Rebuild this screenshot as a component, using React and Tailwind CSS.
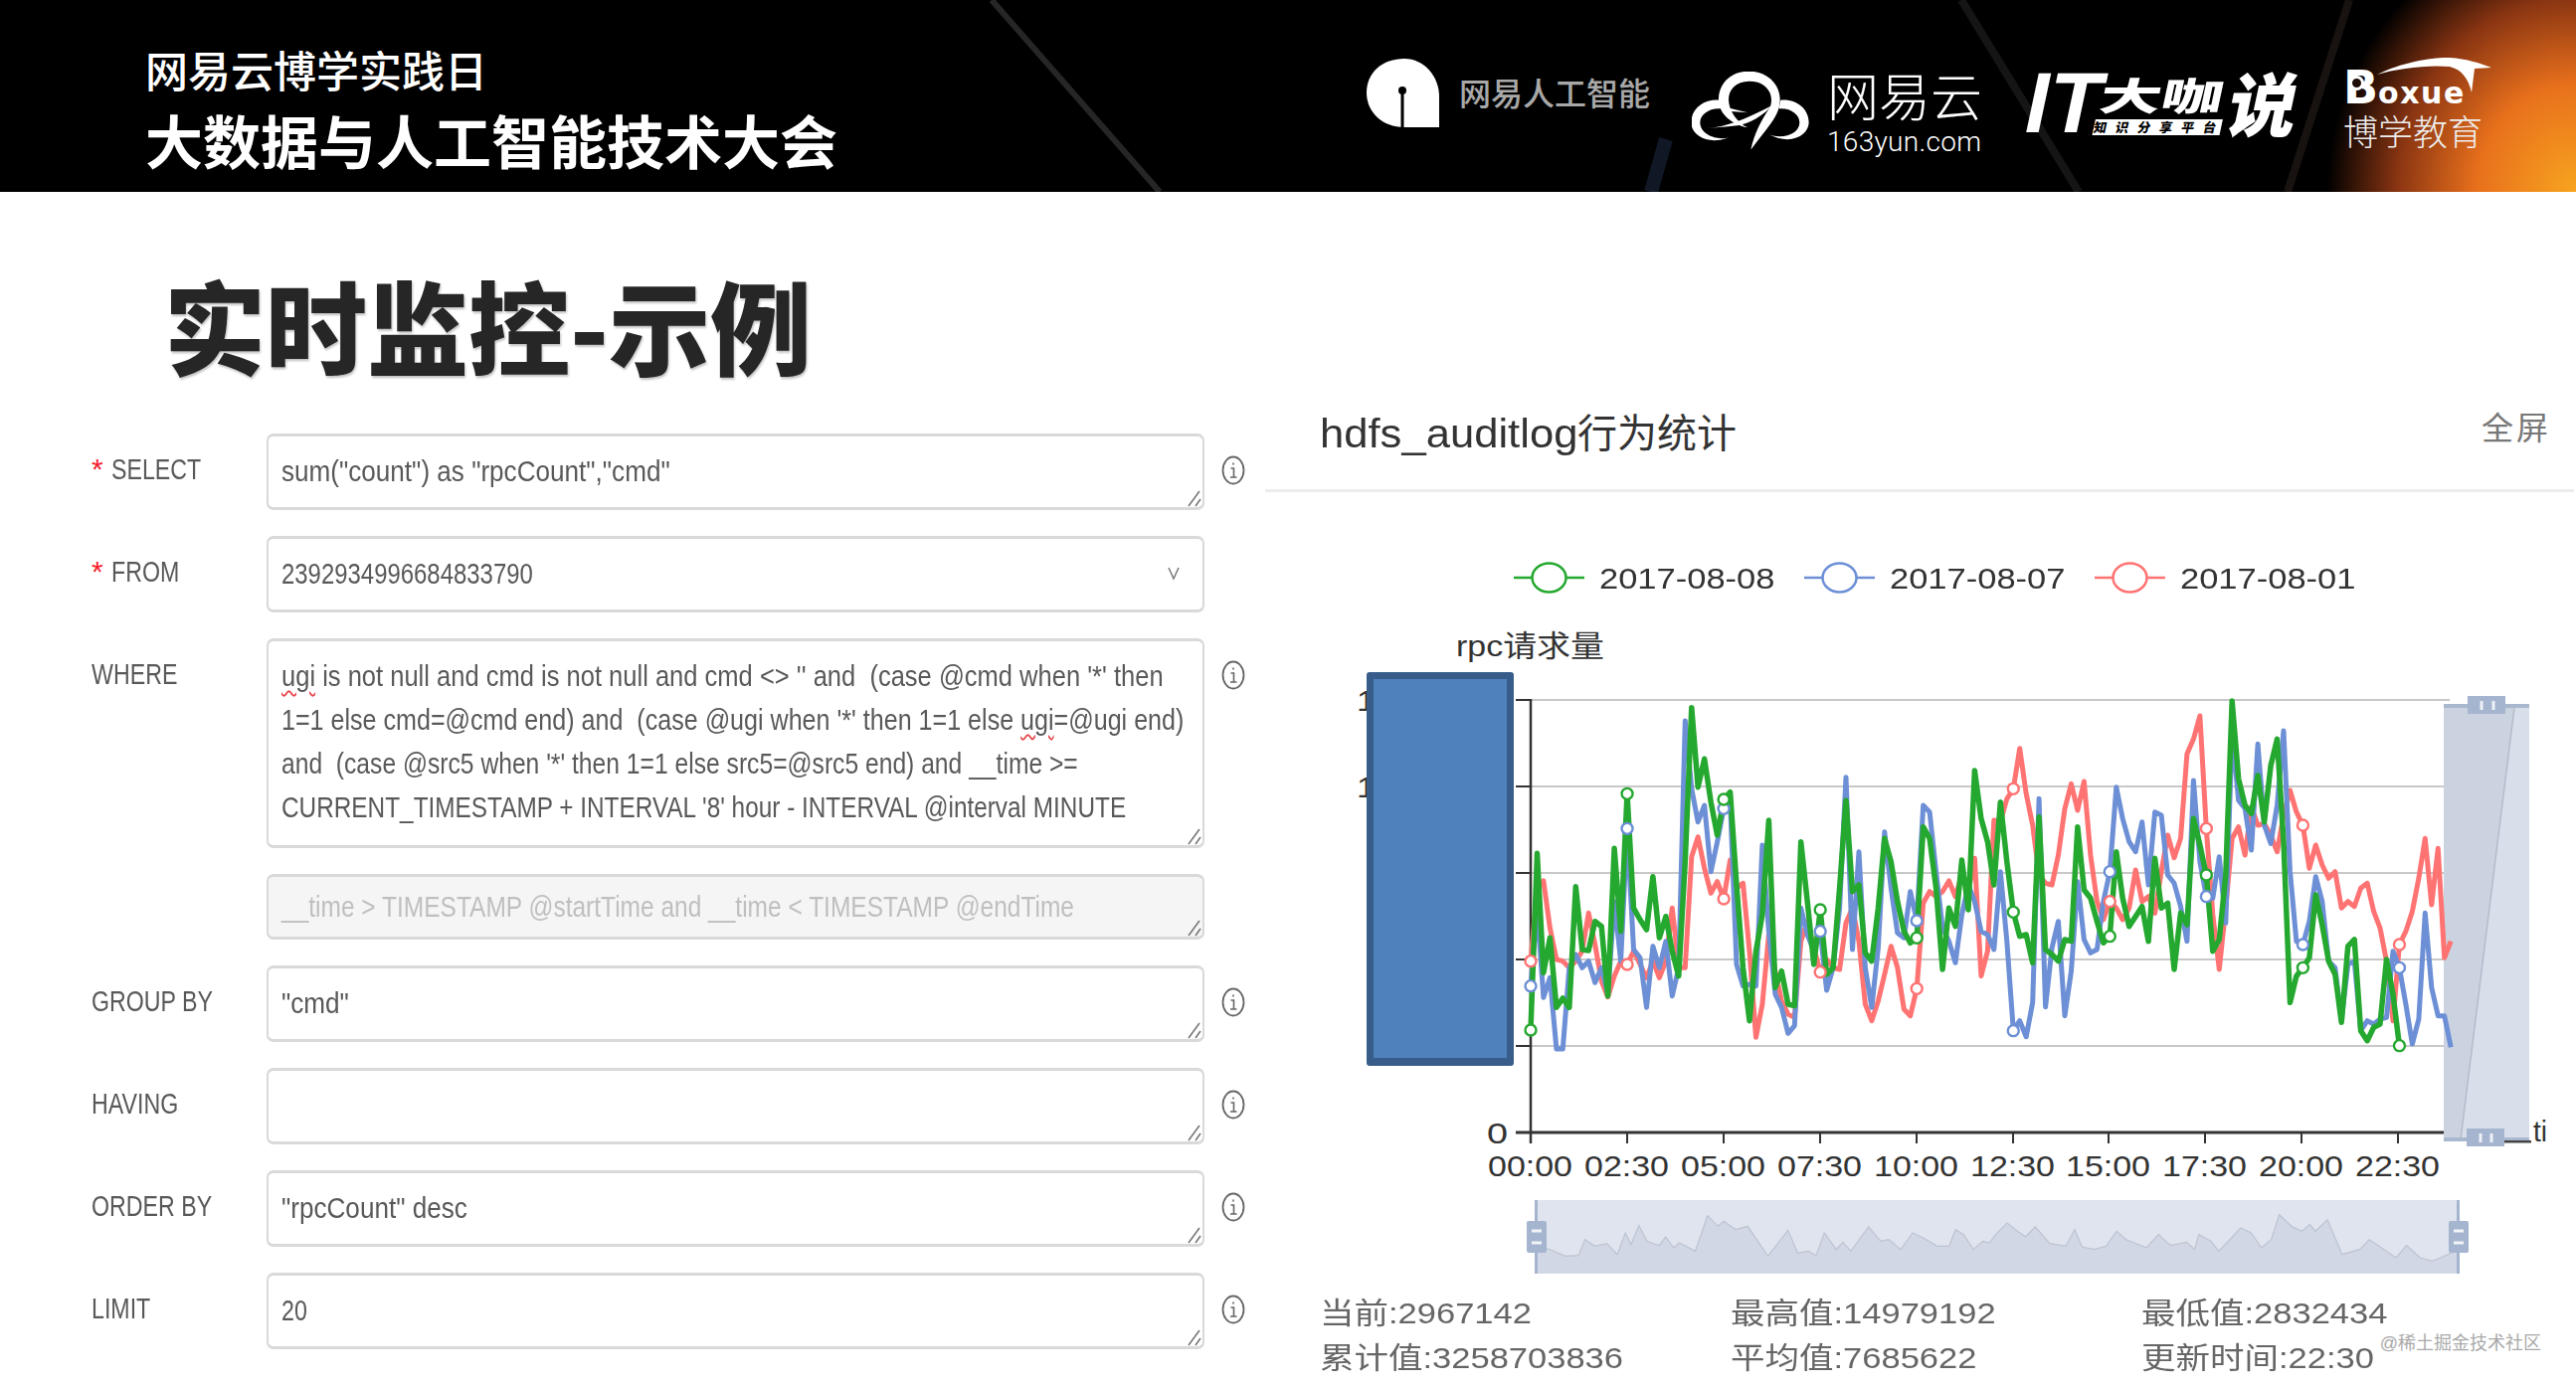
import React from 'react';

const GREEN = [1068,535,895,790,1000,972,1000,635,825,828,740,755,965,520,770,355,700,735,765,605,790,725,830,905,560,95,335,250,380,480,372,350,630,880,1040,830,720,435,940,890,990,995,500,680,870,705,900,880,640,375,650,630,835,860,700,490,560,680,770,805,790,455,490,640,885,700,755,555,705,285,430,500,630,380,560,712,785,780,865,425,825,840,860,795,800,455,645,670,740,805,785,530,670,755,725,695,800,550,700,685,885,715,750,430,510,600,830,795,600,75,310,390,415,300,440,270,190,500,985,905,880,850,660,750,860,900,1045,815,795,1070,1100,1060,1050,855,960,1115];
const BLUE = [935,700,970,910,1125,1125,880,840,880,860,925,880,960,680,860,460,825,850,1000,815,880,800,965,880,135,340,440,390,590,500,400,380,870,935,930,935,510,770,960,1000,1078,1055,700,780,830,770,948,880,700,305,825,530,880,1000,820,470,640,775,790,650,738,390,410,590,760,800,865,720,630,680,770,780,825,590,800,1070,1040,1088,985,370,998,820,740,1025,890,620,795,835,825,680,590,335,430,500,530,440,630,410,420,600,625,695,800,315,560,665,670,545,745,170,375,400,525,205,450,505,390,165,590,800,810,740,605,680,860,880,1040,870,860,1070,1040,1050,1035,1030,830,880,990,1110,1035,715,940,1025,1025,1120];
const RED = [860,640,618,760,855,860,880,860,830,715,810,920,968,905,860,870,830,870,910,860,910,860,700,880,880,545,485,580,655,620,672,555,640,625,830,1090,990,780,890,980,1020,1030,800,740,820,893,855,880,885,745,700,800,990,1040,980,900,815,880,1005,1025,943,685,650,665,650,618,665,600,650,550,905,830,435,440,370,340,218,355,450,600,625,630,540,400,325,405,318,540,680,735,680,700,735,700,585,680,665,715,590,480,548,490,235,190,120,460,720,885,700,490,455,540,395,450,445,480,530,420,345,410,450,580,510,570,610,590,700,680,695,640,625,710,760,860,1040,810,770,710,610,490,690,520,850,800];

const SPARK = [[277,580],[295,590],[313,610],[330,608],[338,560],[350,580],[365,572],[378,605],[388,540],[395,575],[405,518],[415,565],[430,578],[438,552],[448,585],[455,570],[475,595],[490,488],[503,520],[510,505],[525,530],[540,520],[565,610],[590,532],[602,600],[615,595],[625,608],[635,540],[650,590],[658,568],[668,595],[690,522],[705,565],[715,560],[730,590],[745,540],[760,558],[775,580],[790,580],[798,530],[808,545],[820,590],[832,565],[840,570],[848,545],[862,510],[875,535],[885,552],[897,522],[915,572],[935,580],[946,530],[955,582],[970,590],[985,580],[998,535],[1010,560],[1035,585],[1050,545],[1065,578],[1085,568],[1095,590],[1100,545],[1115,565],[1125,595],[1135,570],[1152,525],[1165,540],[1178,585],[1190,560],[1200,485],[1215,520],[1228,535],[1238,515],[1245,535],[1260,500],[1278,605],[1300,590],[1312,560],[1330,590],[1345,615],[1358,578],[1375,615],[1390,625],[1400,615],[1423,590]];

const X_LABELS = ['00:00','02:30','05:00','07:30','10:00','12:30','15:00','17:30','20:00','22:30'];
const TICKS = [1539,1636,1733,1830,1927,2024,2120,2217,2314,2411];
const Y_LABELS = ['15000000','12000000','9000000','6000000','3000000'];
const GRID = [704,791,878,965,1052];

const px = (i) => 1539 + 6.47 * i;
const py = (v) => v / 3 + 680;
const toPoints = (ys) => ys.map((v, i) => `${px(i).toFixed(1)},${py(v).toFixed(1)}`).join(' ');
const sparkPoints = SPARK.map(([x, y]) => `${(x / 1.235 + 1320).toFixed(1)},${(y / 3 + 1060).toFixed(1)}`).join(' ');

const Grip = () => (
  <svg className="absolute right-0 bottom-0" width="16" height="18" viewBox="0 0 16 18">
    <path d="M2 17 L13 2 M9 17 L14 10" stroke="#777" strokeWidth="1.6" fill="none" />
  </svg>
);

const InfoIcon = () => (
  <svg className="mt-[22px] ml-[17px] shrink-0" width="24" height="30" viewBox="0 0 24 30">
    <ellipse cx="12" cy="15" rx="10.5" ry="13.5" fill="none" stroke="#666" strokeWidth="1.8" />
    <path d="M12 7.5v2 M9.5 13h3v9 M9 22h6.5" fill="none" stroke="#666" strokeWidth="1.6" />
  </svg>
);

const Line = ({ children, scale = 'scale-x-[.8]' }) => (
  <div className={`origin-left whitespace-pre ${scale}`}>{children}</div>
);

const Ugi = () => (
  <span className="underline decoration-wavy decoration-[#e5484d] decoration-2 underline-offset-4">ugi</span>
);

const Row = ({ label, required, height, info = true, select, disabled, pad = 'pt-[13px]', children }) => (
  <div className="flex items-start">
    <div className="w-[176px] h-[44px] mt-[14px] flex items-center text-[#595959]">
      {required && <span className="w-[20px] text-[#f5222d] text-[30px]">*</span>}
      {label && <Line>{label}</Line>}
    </div>
    <div
      className={`relative w-[943px] ${height} ${pad} pl-[13px] rounded-[7px] border-x-2 border-y-[3px] border-[#d9d9d9] overflow-hidden ${
        disabled ? 'bg-[#f5f5f5] text-[#bfbfbf]' : 'bg-white text-[#595959]'
      }`}
    >
      {children}
      {select ? (
        <svg className="absolute right-[22px] top-[26px]" width="14" height="16" viewBox="0 0 14 16">
          <path d="M2 3 L7 14 L12 3" fill="none" stroke="#777" strokeWidth="1.5" />
        </svg>
      ) : (
        <Grip />
      )}
    </div>
    {info && !disabled && <InfoIcon />}
  </div>
);

const T = ({ x, y, w, anchor = 'start', size = 30, fill = '#333', children }) => (
  <text
    x={x}
    y={y}
    textAnchor={anchor}
    fontSize={size}
    fill={fill}
    textLength={w}
    lengthAdjust={w ? 'spacingAndGlyphs' : undefined}
  >
    {children}
  </text>
);

const Chart = () => (
  <div className="relative mt-[19px] h-[678px]">
    <svg className="block" width="1318" height="678" viewBox="1272 620 1318 678">
      <T x={1464} y={660} w={149}>rpc请求量</T>
      {Y_LABELS.map((l, i) => (
        <T key={l} x={1516} y={GRID[i] + 11} anchor="end" w={l.length * 19}>{l}</T>
      ))}
      <T x={1495} y={1150} w={21}>0</T>
      {GRID.map((y) => (
        <g key={y}>
          <line x1="1539" x2="2463" y1={y} y2={y} stroke="#c8c8c8" strokeWidth="2" />
          <line x1="1524" x2="1539" y1={y} y2={y} stroke="#333" strokeWidth="2" />
        </g>
      ))}

      {/* vertical data zoom */}
      <rect x="2457" y="710" width="86" height="436" fill="#d9dfea" />
      <polygon points="2457,710 2528,710 2474,1146 2457,1146" fill="#cbd3e1" />
      <line x1="2528" y1="712" x2="2474" y2="1146" stroke="#b4bccb" strokeWidth="1.5" />
      <rect x="2457" y="708" width="86" height="4" fill="#aab8cf" />
      <rect x="2457" y="1144" width="86" height="4" fill="#aab8cf" />
      <rect x="2481" y="700" width="38" height="18" fill="#a6b5cf" />
      <path d="M2495 705v9 M2507 705v9" stroke="#eef1f6" strokeWidth="3" />
      <rect x="2480" y="1135" width="38" height="18" fill="#a6b5cf" />
      <path d="M2494 1140v9 M2505 1140v9" stroke="#eef1f6" strokeWidth="3" />

      <line x1="1539" x2="1539" y1="703" y2="1150" stroke="#333" strokeWidth="2.5" />
      <line x1="1524" x2="2457" y1="1139" y2="1139" stroke="#333" strokeWidth="3" />
      {TICKS.map((x) => (
        <line key={x} x1={x} x2={x} y1="1139" y2="1150" stroke="#333" strokeWidth="2" />
      ))}
      {X_LABELS.map((l, i) => (
        <T key={l} x={TICKS[i] - 43} y={1183} w={85}>{l}</T>
      ))}
      <rect x="2518" y="1147" width="27" height="2.5" fill="#444" />
      <T x={2547} y={1148} w={14}>ti</T>

      <polyline points={toPoints(RED)} fill="none" stroke="#ff7373" strokeWidth="5" strokeLinejoin="round" />
      <polyline points={toPoints(BLUE)} fill="none" stroke="#6c8fd6" strokeWidth="5" strokeLinejoin="round" />
      <polyline points={toPoints(GREEN)} fill="none" stroke="#25a82f" strokeWidth="5.5" strokeLinejoin="round" />
      {[
        [RED, '#ff7373'],
        [BLUE, '#6c8fd6'],
        [GREEN, '#25a82f'],
      ].map(([data, color]) =>
        [0, 15, 30, 45, 60, 75, 90, 105, 120, 135].map((i) => (
          <circle key={color + i} cx={px(i)} cy={py(data[i])} r="5.5" fill="#fff" stroke={color} strokeWidth="2.4" />
        ))
      )}

      {/* bottom data zoom */}
      <rect x="1544" y="1207" width="928" height="74" fill="#dfe4ee" />
      <polygon points={`1544,1281 ${sparkPoints} 2472,1281`} fill="#d1d7e4" />
      <polyline points={sparkPoints} fill="none" stroke="#bcc4d2" strokeWidth="1.2" />
      <rect x="1543" y="1207" width="3" height="74" fill="#a6b5cf" />
      <rect x="2470" y="1207" width="3" height="74" fill="#a6b5cf" />
      <rect x="1535" y="1228" width="20" height="32" rx="2" fill="#a6b5cf" />
      <path d="M1540 1238h10 M1540 1250h10" stroke="#f2f4f8" strokeWidth="3" />
      <rect x="2462" y="1228" width="20" height="32" rx="2" fill="#a6b5cf" />
      <path d="M2467 1238h10 M2467 1250h10" stroke="#f2f4f8" strokeWidth="3" />
    </svg>
    {/* blue block pasted over the y axis labels */}
    <div className="absolute left-[102px] top-[56px] w-[148px] h-[396px] rounded-[3px] bg-[#4f81bd] border-x-[7px] border-t-[7px] border-b-[8px] border-[#385d8a]" />
  </div>
);

const LegendItem = ({ color, label }) => (
  <div className="flex items-center gap-[15px]">
    <svg width="71" height="32" viewBox="0 0 71 32">
      <line x1="0" x2="71" y1="16" y2="16" stroke={color} strokeWidth="2.5" />
      <ellipse cx="35.5" cy="16" rx="17" ry="14.5" fill="#fff" stroke={color} strokeWidth="2.5" />
    </svg>
    <div className="w-[176px] origin-left scale-x-[1.15] whitespace-pre text-[30px] text-[#333]">{label}</div>
  </div>
);

const Stat = ({ children }) => (
  <div className="origin-left scale-x-[1.15] whitespace-pre">{children}</div>
);

// coordinates are the 3x crop of the logo, so viewBox is offset and scaled
const CloudLogo = () => (
  <svg width="120" height="78" viewBox="27 36 360 234" fill="#fff">
    <path d="M195 205 C150 195 105 165 108 115 C112 65 150 35 200 35 C255 35 295 75 293 125 C292 170 250 210 205 272 C215 225 235 185 262 145 C275 120 265 65 200 65 C160 65 138 90 138 120 C138 155 165 190 195 205 Z" />
    <path d="M112 122 C60 118 25 150 25 190 C25 225 70 260 140 235 C100 245 52 225 52 190 C52 165 80 145 115 148 Z" />
    <path d="M295 122 C345 118 380 150 380 190 C380 225 330 262 258 225 C300 242 352 225 352 190 C352 165 325 145 290 148 Z" />
    <path d="M72 207 C130 205 200 175 270 138 C230 180 190 198 150 200 C120 203 95 205 72 207 Z" />
    <path d="M135 145 L195 160 L145 156 Z" />
  </svg>
);

const Logos = () => (
  <div className="relative flex items-start pr-[85px]">
    <div className="flex items-center gap-[20px] mt-[59px]">
      <svg width="73" height="69" viewBox="0 0 73 69">
        <path d="M38 0 C58 0 73 18 73 38 L73 69 L38 69 C16 69 0 54 0 34 C0 14 16 0 38 0 Z" fill="#fff" />
        <line x1="36" x2="36" y1="32" y2="69" stroke="#000" strokeWidth="3" />
        <circle cx="36" cy="32" r="4" fill="#000" />
      </svg>
      <div className="text-[32px] font-medium text-[#a8a8a8] mb-[4px]">网易人工智能</div>
    </div>
    <div className="flex items-start gap-[16px] ml-[42px] mt-[72px]">
      <CloudLogo />
      <div className="flex flex-col text-white font-light">
        <div className="text-[52px] leading-[46px]">网易云</div>
        <div className="text-[28px] leading-[34px] mt-[8px] tracking-[.3px] font-['Roboto',sans-serif]">163yun.com</div>
      </div>
    </div>
    <div className="flex items-start ml-[45px] mt-[72px] text-white w-[273px]">
      <div className="w-[72px] -skew-x-12 text-[86px] leading-[62px] font-bold font-['Liberation_Sans',sans-serif]">IT</div>
      <div className="flex flex-col w-[128px] -skew-x-12 mt-[3px]">
        <div className="h-[37px] origin-top scale-y-[.62] text-[62px] leading-[62px] font-black whitespace-pre">大咖</div>
        <div className="mt-[8px] h-[16px] bg-white text-black text-[13px] leading-[16px] font-black tracking-[9px] text-center whitespace-pre">知识分享平台</div>
      </div>
      <div className="-skew-x-12 ml-[4px] text-[70px] leading-[60px] font-black">说</div>
    </div>
    <div className="relative ml-[45px] mt-[68px] w-[149px] text-white">
      <div className="relative flex items-baseline h-[40px] font-['DejaVu_Sans',sans-serif] font-bold">
        <span className="text-[46px] leading-[40px]">B</span>
        <span className="text-[30px] leading-[40px] tracking-[1.5px]">oxue</span>
        <span className="absolute left-[6px] top-[8px] w-[15px] h-[15px] rounded-full bg-[#1d0d06] border-[3px] border-white" />
      </div>
      <svg className="absolute left-[34px] -top-[11px]" width="116" height="40" viewBox="0 0 116 40">
        <path d="M0 18 C25 5 60 0 73 1 C90 2 105 7 115 11 L98 12 C97 20 96 28 95 36 C92 22 85 13 73 10 C50 8 20 12 0 18 Z" fill="#fff" />
      </svg>
      <div className="mt-[3px] text-[35px] leading-[40px] text-[#eee] font-light whitespace-pre">博学教育</div>
    </div>
  </div>
);

export default function App() {
  return (
    <div className="w-[2590px] h-[1395px] overflow-hidden bg-white flex flex-col font-['Liberation_Sans','Noto_Sans_CJK_SC',sans-serif]">
      <header className="relative h-[193px] shrink-0 bg-black flex justify-between font-['Noto_Sans_CJK_SC',sans-serif]">
        <div className="absolute inset-0 bg-[radial-gradient(ellipse_250px_270px_at_100%_100%,#f7a41f_0%,#e8701c_40%,#8a3512_72%,transparent_100%)]" />
        <svg className="absolute inset-0" width="2590" height="193" viewBox="0 0 2590 193">
          <line x1="997" y1="0" x2="1166" y2="193" stroke="#262626" strokeWidth="6" />
          <line x1="1972" y1="0" x2="2090" y2="193" stroke="#151515" strokeWidth="8" />
          <line x1="2362" y1="0" x2="2300" y2="193" stroke="#181310" strokeWidth="8" />
          <line x1="1675" y1="140" x2="1660" y2="193" stroke="#101826" strokeWidth="14" />
        </svg>
        <div className="relative pl-[146px] pt-[45px] text-white">
          <div className="text-[43px] leading-[48px] font-medium">网易云博学实践日</div>
          <div className="mt-[15px] text-[58px] leading-[64px] font-bold">大数据与人工智能技术大会</div>
        </div>
        <Logos />
      </header>

      <main className="flex-1 flex">
        <section className="w-[1272px] shrink-0 text-[29px] leading-[44px]">
          <h1 className="pl-[165px] pt-[83px] h-[188px] text-[102px] leading-[100px] font-black text-[#262626] font-['Noto_Sans_CJK_SC',sans-serif] drop-shadow-[1px_2px_1px_rgba(0,0,0,0.25)]">
            实时监控-示例
          </h1>
          <div className="mt-[55px] pl-[92px] flex flex-col gap-[26px]">
            <Row label="SELECT" required height="h-[77px]">
              <Line scale="scale-x-[.9]">sum("count") as "rpcCount","cmd"</Line>
            </Row>
            <Row label="FROM" required height="h-[77px]" select info={false}>
              <Line scale="scale-x-[.825]">2392934996684833790</Line>
            </Row>
            <Row label="WHERE" height="h-[211px]">
              <Line scale="scale-x-[.88]"><Ugi /> is not null and cmd is not null and cmd &lt;&gt; '' and  (case @cmd when '*' then</Line>
              <Line scale="scale-x-[.865]">1=1 else cmd=@cmd end) and  (case @ugi when '*' then 1=1 else <Ugi />=@ugi end)</Line>
              <Line scale="scale-x-[.85]">and  (case @src5 when '*' then 1=1 else src5=@src5 end) and __time &gt;=</Line>
              <Line scale="scale-x-[.84]">CURRENT_TIMESTAMP + INTERVAL '8' hour - INTERVAL @interval MINUTE</Line>
            </Row>
            <Row height="h-[66px]" disabled pad="pt-[8px]">
              <Line scale="scale-x-[.845]">__time &gt; TIMESTAMP @startTime and __time &lt; TIMESTAMP @endTime</Line>
            </Row>
            <Row label="GROUP BY" height="h-[77px]">
              <Line scale="scale-x-[.9]">"cmd"</Line>
            </Row>
            <Row label="HAVING" height="h-[77px]" />
            <Row label="ORDER BY" height="h-[77px]">
              <Line scale="scale-x-[.9]">"rpcCount" desc</Line>
            </Row>
            <Row label="LIMIT" height="h-[77px]">
              <Line>20</Line>
            </Row>
          </div>
        </section>

        <section className="relative flex-1">
          <div className="mt-[221px] h-[44px] pl-[55px] pr-[25px] flex items-center justify-between">
            <div className="flex items-center text-[40px] leading-[44px] text-[#333]">
              <span className="w-[259px] origin-left scale-x-[1.09] whitespace-pre">hdfs_auditlog</span>
              <span>行为统计</span>
            </div>
            <div className="text-[32px] leading-[34px] tracking-[3px] text-[#777] -mt-[10px]">全屏</div>
          </div>
          <div className="mt-[34px] mr-[2px] h-[3px] bg-[#ececec]" />
          <div className="mt-[66px] h-[40px] pl-[250px] flex items-center gap-[30px]">
            <LegendItem color="#25a82f" label="2017-08-08" />
            <LegendItem color="#6c8fd6" label="2017-08-07" />
            <LegendItem color="#ff7373" label="2017-08-01" />
          </div>
          <Chart />
          <div className="pl-[55px] grid grid-cols-[413px_413px_1fr] text-[30px] leading-[45px] text-[#666]">
            <Stat>当前:2967142</Stat>
            <Stat>最高值:14979192</Stat>
            <Stat>最低值:2832434</Stat>
            <Stat>累计值:3258703836</Stat>
            <Stat>平均值:7685622</Stat>
            <Stat>更新时间:22:30</Stat>
          </div>
          <div className="absolute right-[35px] bottom-[34px] text-[18px] leading-[20px] text-[#a9a9a9]">@稀土掘金技术社区</div>
        </section>
      </main>
    </div>
  );
}
